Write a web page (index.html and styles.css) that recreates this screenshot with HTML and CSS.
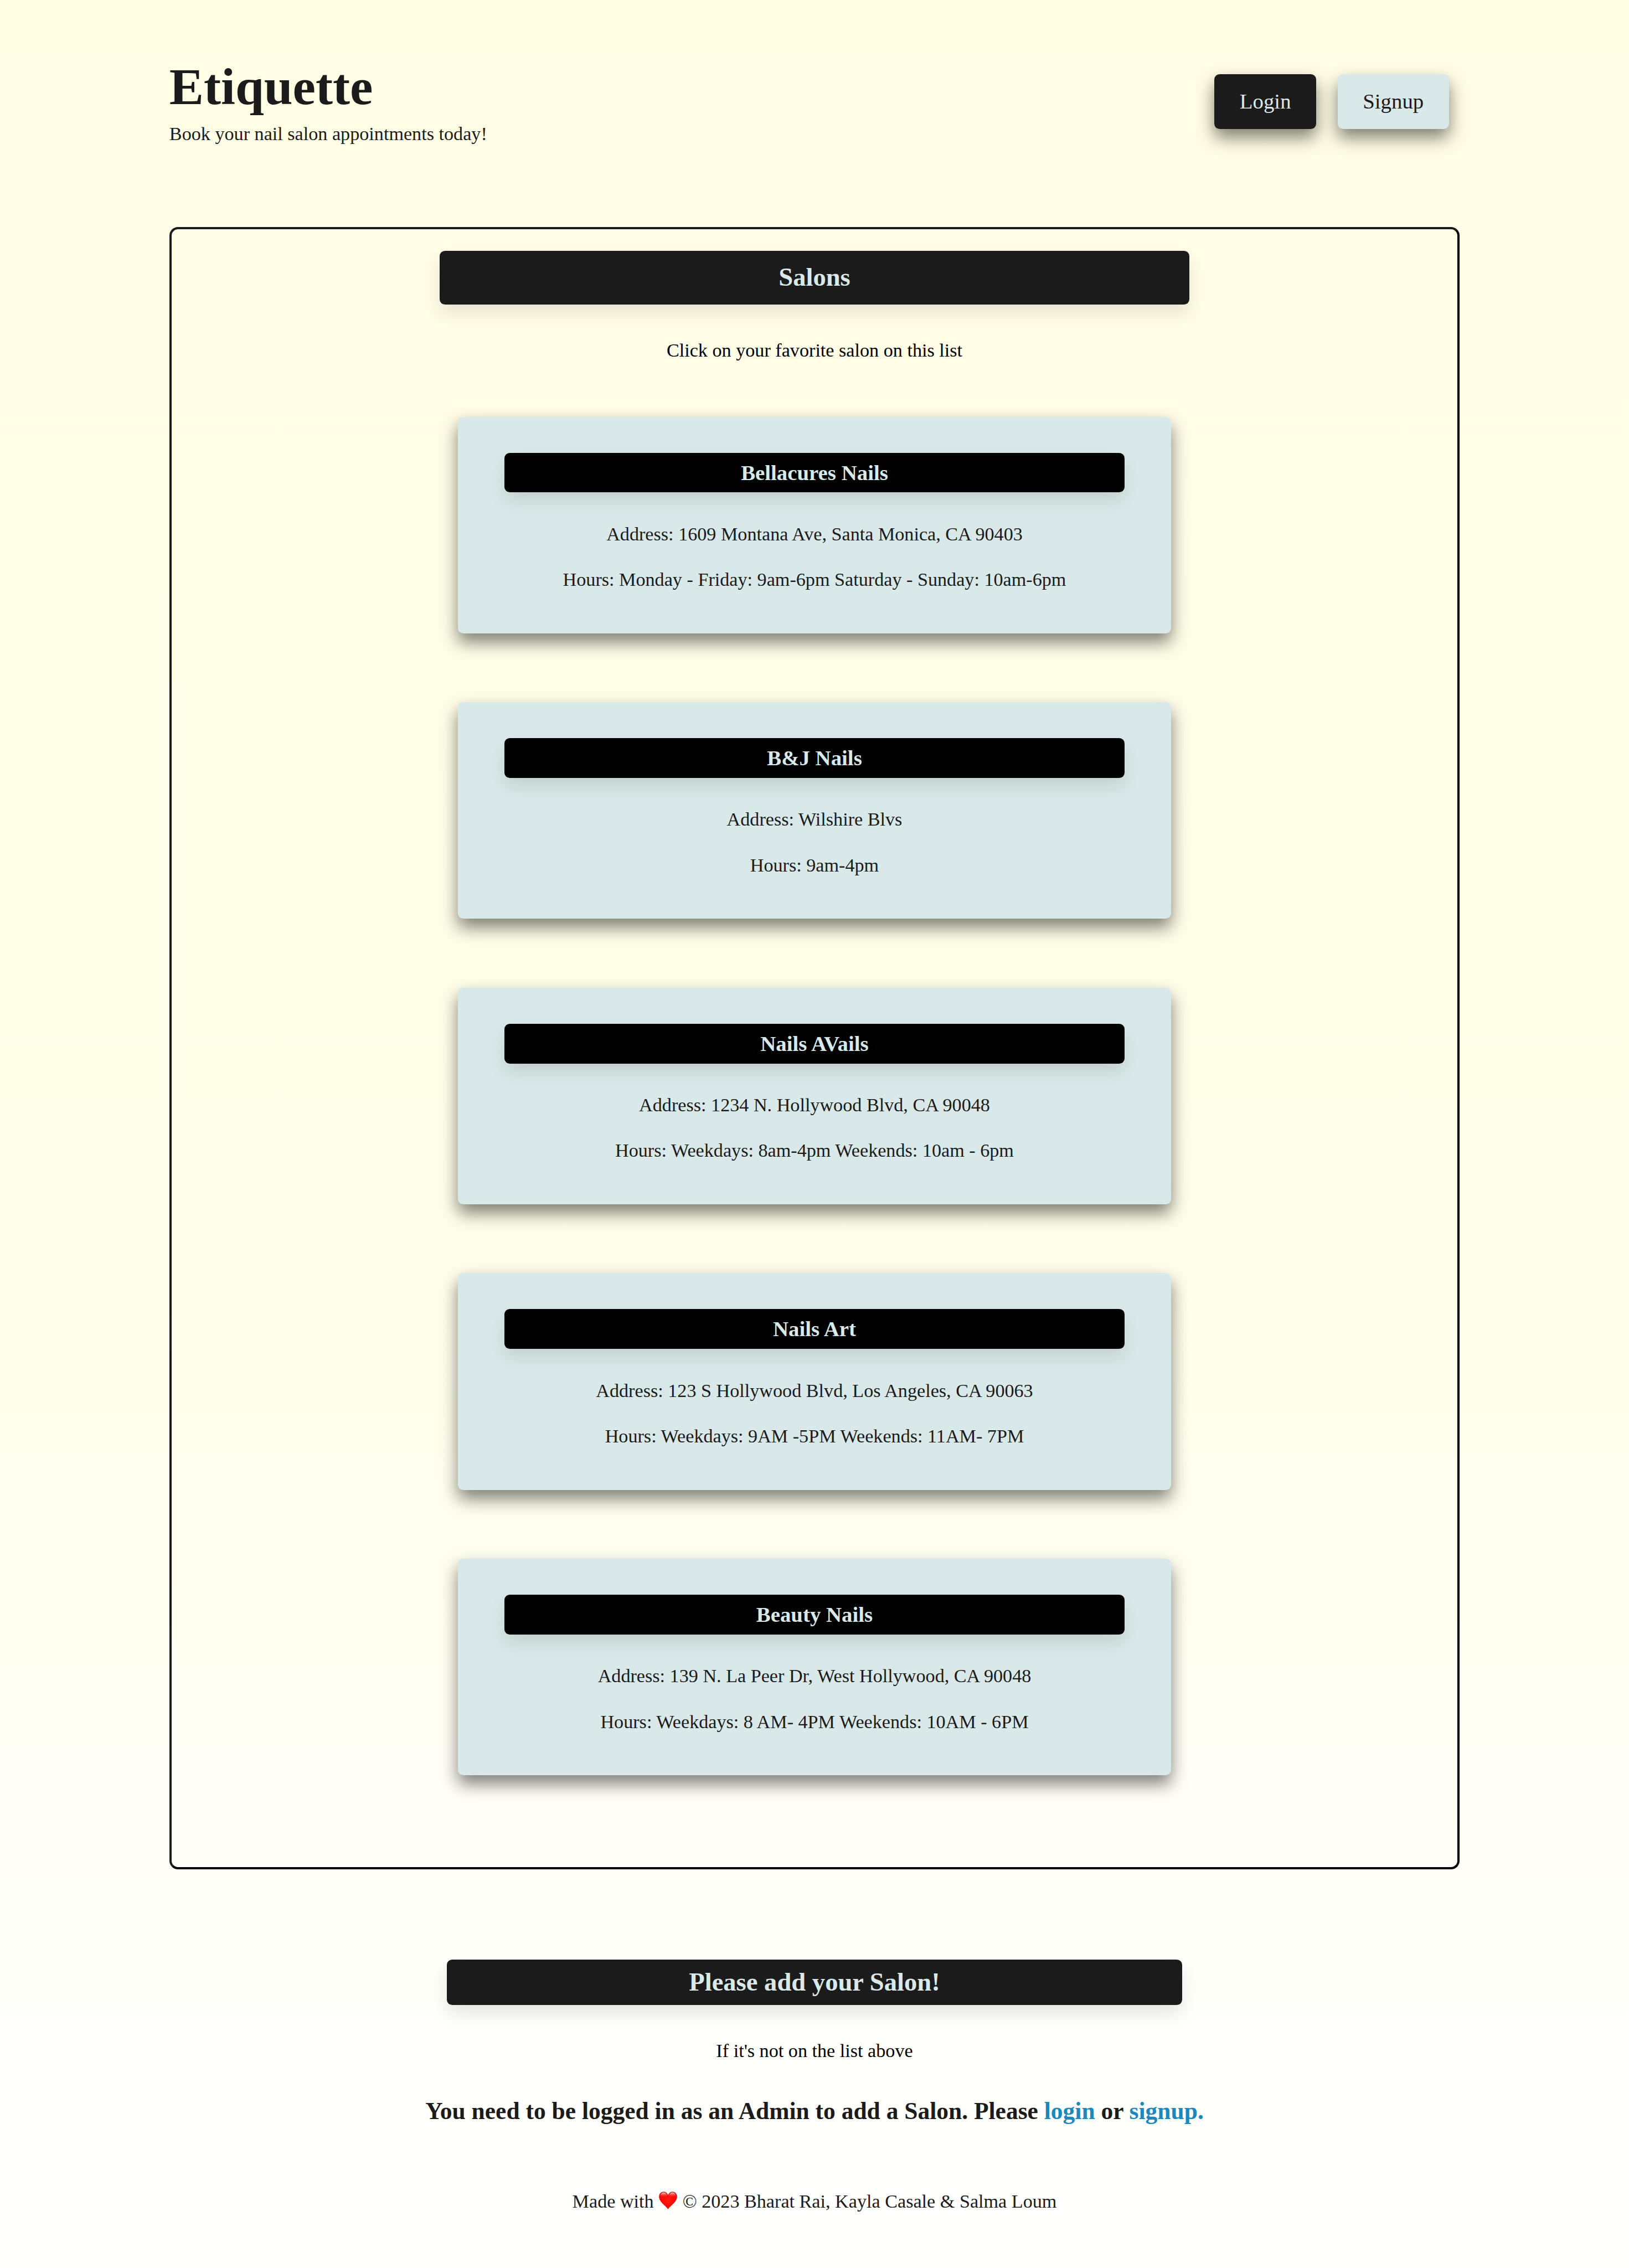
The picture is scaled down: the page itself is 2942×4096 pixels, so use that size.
FILE: index.html
```html
<!DOCTYPE html>
<html lang="en">
<head>
<meta charset="utf-8">
<title>Etiquette</title>
<link rel="stylesheet" href="styles.css">
</head>
<body>
<header class="site-header">
  <div class="brand">
    <h1 class="brand-name">Etiquette</h1>
    <p class="tagline">Book your nail salon appointments today!</p>
  </div>
  <nav class="actions">
    <a class="btn btn-dark">Login</a>
    <a class="btn btn-light">Signup</a>
  </nav>
</header>
<main>
  <section class="salons">
    <h2 class="bar salons-title">Salons</h2>
    <p class="hint">Click on your favorite salon on this list</p>
    <div class="salon-list">
      <article class="card">
        <h3 class="card-name">Bellacures Nails</h3>
        <p class="line">Address: 1609 Montana Ave, Santa Monica, CA 90403</p>
        <p class="line">Hours: Monday - Friday: 9am-6pm Saturday - Sunday: 10am-6pm</p>
      </article>
      <article class="card">
        <h3 class="card-name">B&amp;J Nails</h3>
        <p class="line">Address: Wilshire Blvs</p>
        <p class="line">Hours: 9am-4pm</p>
      </article>
      <article class="card">
        <h3 class="card-name">Nails AVails</h3>
        <p class="line">Address: 1234 N. Hollywood Blvd, CA 90048</p>
        <p class="line">Hours: Weekdays: 8am-4pm Weekends: 10am - 6pm</p>
      </article>
      <article class="card">
        <h3 class="card-name">Nails Art</h3>
        <p class="line">Address: 123 S Hollywood Blvd, Los Angeles, CA 90063</p>
        <p class="line">Hours: Weekdays: 9AM -5PM Weekends: 11AM- 7PM</p>
      </article>
      <article class="card">
        <h3 class="card-name">Beauty Nails</h3>
        <p class="line">Address: 139 N. La Peer Dr, West Hollywood, CA 90048</p>
        <p class="line">Hours: Weekdays: 8 AM- 4PM Weekends: 10AM - 6PM</p>
      </article>
    </div>
  </section>
  <section class="add-salon">
    <h2 class="bar add-title">Please add your Salon!</h2>
    <p class="hint add-hint">If it's not on the list above</p>
    <p class="notice">You need to be logged in as an Admin to add a Salon. Please <a class="link">login</a> or <a class="link">signup.</a></p>
  </section>
</main>
<footer class="site-footer">Made with <svg class="heart" viewBox="0 0 34 33"><defs><linearGradient id="shine" x1="0" y1="0" x2="0" y2="1"><stop offset="0" stop-color="#ffd0cc"/><stop offset="1" stop-color="#ff3b30" stop-opacity="0"/></linearGradient><radialGradient id="red" cx=".5" cy=".5" r=".6"><stop offset="0" stop-color="#ff1a0e"/><stop offset=".75" stop-color="#fb0505"/><stop offset="1" stop-color="#c90000"/></radialGradient></defs><path fill="url(#red)" d="M17 33C14 27 .3 20 .3 9.500C.3 4 4 .3 8.800 .3C12.800 .3 15.600 3 17 6.600C18.400 3 21.200 .3 25.200 .3C30 .3 33.700 4 33.700 9.500C33.700 20 20 27 17 33Z"/><path fill="url(#shine)" d="M2 9C2 4.500 5 1.500 8.800 1.500C12.300 1.500 14.500 4 15.500 7.500C13 11 4.500 11 2 9ZM32 9C32 4.500 29 1.500 25.200 1.500C21.700 1.500 19.500 4 18.500 7.500C21 11 29.500 11 32 9Z"/></svg> © 2023 Bharat Rai, Kayla Casale &amp; Salma Loum</footer>
</body>
</html>
```
FILE: styles.css
```css
* { box-sizing: border-box; margin: 0; padding: 0; }

/* 1rem = 100 design units */
html { font-size: 97.096px; }

body {
  height: 42.18rem;
  overflow: hidden;
  font: .352rem/.4rem "Liberation Serif", "Times New Roman", serif;
  color: #1b1b1b;
  background: linear-gradient(#fffde4, #fffeea 55%, #fffff1 70%, #fffff9 84%, #fffffe);
}

.site-header {
  display: flex;
  justify-content: space-between;
  width: 24rem;
  height: 4.22rem;
  margin: 0 auto;
  padding-top: 1.07rem;
}
.brand-name { font-size: .96rem; line-height: 1.1rem; }
.tagline { margin-top: .125rem; }

.actions {
  display: flex;
  align-items: flex-start;
  gap: .4rem;
  margin: .31rem .2rem 0 0;
}
.btn {
  width: 1.89rem;
  border-radius: .1rem;
  font-size: .4rem;
  line-height: 1.01rem;
  padding-bottom: .01rem;
  text-align: center;
  box-shadow: 0 .16rem .32rem rgba(0, 0, 0, .5);
}
.btn-dark { background: #1b1b1b; color: #d9e8e8; }
.btn-light { width: 2.07rem; background: #d9e8e8; }

.salons {
  width: 24rem;
  height: 30.55rem;
  margin: 0 auto;
  padding-top: .4rem;
  border: 4px solid;
  border-color: #1b1b1b #000 #000 #1b1b1b;
  border-radius: .16rem;
  text-align: center;
}
.bar {
  margin: 0 auto;
  border-radius: .1rem;
  background: #1b1b1b;
  color: #d9e8e8;
  font-size: .48rem;
  box-shadow: 0 .16rem .32rem rgba(0, 0, 0, .1);
}
.salons-title { width: 13.94rem; line-height: .98rem; padding-bottom: .02rem; }
.hint { margin-top: .66rem; color: #000; }

.salon-list {
  display: flex;
  flex-direction: column;
  align-items: center;
  gap: 1.28rem;
  margin-top: 1.03rem;
}
.card {
  width: 13.26rem;
  height: 4.03rem;
  padding: .67rem .86rem 0;
  border-radius: .1rem;
  background: #d9e8e8;
  box-shadow: 0 .16rem .32rem rgba(0, 0, 0, .5);
}
.card-name {
  margin-bottom: .58rem;
  padding-bottom: .005rem;
  border-radius: .1rem;
  background: #000;
  color: #d9e8e8;
  font-size: .4rem;
  line-height: .735rem;
  box-shadow: 0 .16rem .32rem rgba(0, 0, 0, .1);
}
.line { line-height: .4rem; margin-bottom: .45rem; white-space: nowrap; }

.add-salon { padding-top: 1.68rem; text-align: center; }
.add-title { width: 13.68rem; line-height: .83rem; padding-bottom: .01rem; }
.add-hint { margin-top: .66rem; }
.notice {
  margin-top: .66rem;
  font-size: .448rem;
  font-weight: 700;
  line-height: .5rem;
}
.link { color: #1c88c0; }

.site-footer { margin-top: 1.24rem; text-align: center; }
.heart { width: .34rem; height: .33rem; margin: 0 .01rem; vertical-align: -.04rem; }
```
